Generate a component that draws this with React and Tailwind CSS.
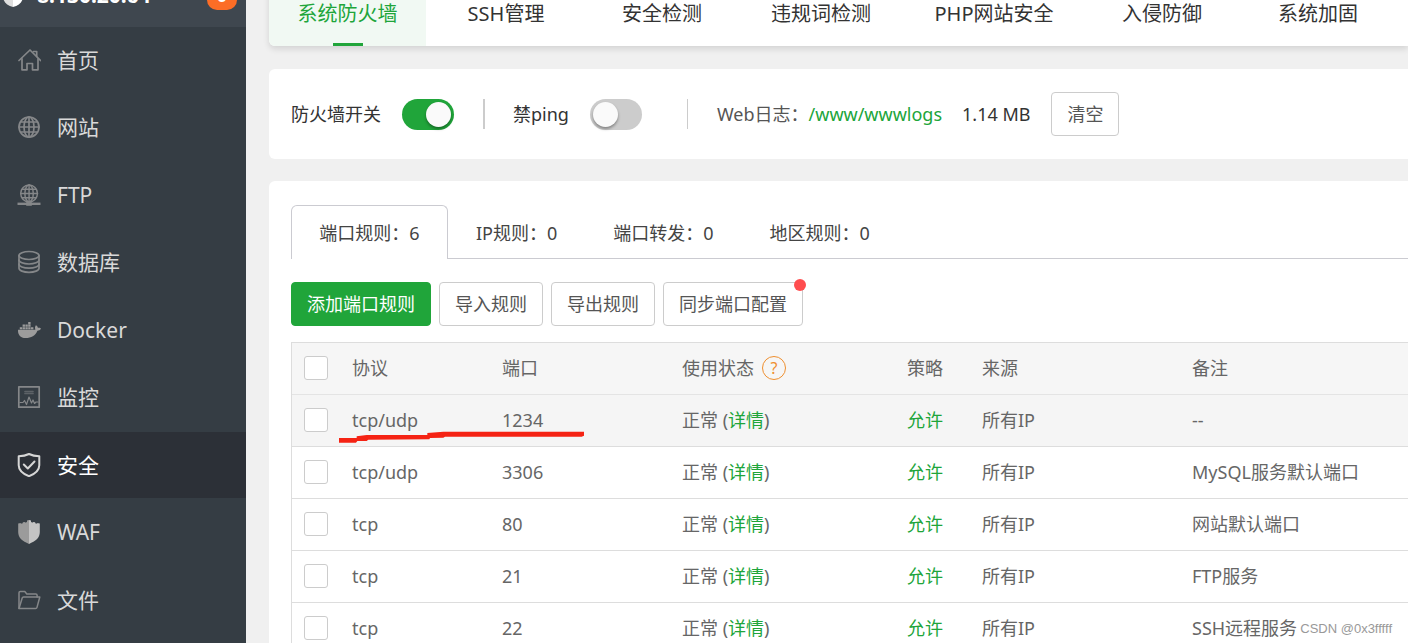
import React from "react";
import { FaDocker } from "react-icons/fa";

const line = { fill: "none", stroke: "currentColor", strokeWidth: 1.7, strokeLinejoin: "round", strokeLinecap: "round" };

function Icon({ children }) {
  return (
    <svg viewBox="0 0 24 24" className="size-6 shrink-0" aria-hidden="true">
      {children}
    </svg>
  );
}

const HomeIcon = () => (
  <Icon>
    <g {...line}>
      <path d="M2 12.5 13 2l10.500 10.500" />
      <path d="M16.500 3.500h3.200v5" />
      <path d="M5 10.800v11h5v-6.300h5.500v6.300H21v-11" />
    </g>
  </Icon>
);

const Globe = () => (
  <g {...line}>
    <circle cx="12" cy="12" r="10" />
    <ellipse cx="12" cy="12" rx="5" ry="10" />
    <path d="M12 2v20M2 12h20M3.600 7h16.800M3.600 17h16.800" />
  </g>
);

const SiteIcon = () => (
  <Icon>
    <Globe />
  </Icon>
);

const FtpIcon = () => (
  <Icon>
    <g transform="translate(2 .4) scale(.84)">
      <Globe />
    </g>
    <path d="M9.200 18.800h5.600v4H9.200z" fill="currentColor" />
    <path d="M.5 20.800h23" stroke="currentColor" strokeWidth="2.400" />
  </Icon>
);

const DatabaseIcon = () => (
  <Icon>
    <g {...line}>
      <ellipse cx="12" cy="5.500" rx="10" ry="4" />
      <path d="M2 5.500v12.800c0 2.300 4.500 4 10 4s10-1.700 10-4V5.500" />
      <path d="M2 10c0 2.200 4.500 4 10 4s10-1.800 10-4M2 14.200c0 2.200 4.500 4 10 4s10-1.800 10-4" />
    </g>
  </Icon>
);

const MonitorIcon = () => (
  <Icon>
    <g {...line}>
      <path d="M1.800 1.800h20.400v20.400H1.800z" />
      <path d="M8 6.500h8M8 8.500h8" opacity=".5" />
      <path d="M3 17.500h3l1.500-2 2 4 2.500-7.500 2.500 6 1.500-3 1.500 3.500 1.500-1.500h2" strokeWidth="1.200" />
    </g>
  </Icon>
);

const ShieldIcon = () => (
  <Icon>
    <g {...line} strokeWidth="2">
      <path d="M12 1C8.500 2.800 5 3.200 1.700 3.200v9c0 5.300 4.800 8.800 10.300 11 5.500-2.200 10.300-5.700 10.300-11v-9C19 3.200 15.500 2.800 12 1z" />
      <path d="m6.800 11.500 4 4L17.500 8.500" />
    </g>
  </Icon>
);

const WafIcon = () => (
  <Icon>
    <path d="M12 0v24C5.500 21 1.200 18 1.200 12V3.500l2.600-.5v.8l2-.5v-1l2.400-.4v.8L10 2V.6z" fill="#9b9b9b" />
    <path d="M12 0v24c6.500-3 10.800-6 10.800-12V3.500l-2.600-.5v.8l-2-.5v-1l-2.400-.4v.8L14 2V.6z" fill="#c4c4c4" />
  </Icon>
);

const FolderIcon = () => (
  <Icon>
    <g {...line} strokeWidth="1.500">
      <path d="M2 20.500V4.800c0-.8.500-1.300 1.300-1.300h4.500l2 2.500h9c.8 0 1.300.5 1.300 1.300V9" />
      <path d="M2 20.500 5.200 10c.2-.7.600-1 1.300-1h16.300L20 19.400c-.2.700-.7 1.100-1.400 1.100z" />
    </g>
  </Icon>
);

const nav = [
  { label: "首页", icon: <HomeIcon /> },
  { label: "网站", icon: <SiteIcon /> },
  { label: "FTP", icon: <FtpIcon /> },
  { label: "数据库", icon: <DatabaseIcon /> },
  { label: "Docker", icon: <FaDocker className="size-6 shrink-0 pl-px text-[#9c9c9c]" aria-hidden="true" /> },
  { label: "监控", icon: <MonitorIcon /> },
  { label: "安全", icon: <ShieldIcon />, active: true },
  { label: "WAF", icon: <WafIcon /> },
  { label: "文件", icon: <FolderIcon /> },
];

const sections = ["系统防火墙", "SSH管理", "安全检测", "违规词检测", "PHP网站安全", "入侵防御", "系统加固"];

const ruleTabs = ["端口规则：6", "IP规则：0", "端口转发：0", "地区规则：0"];

const rules = [
  { protocol: "tcp/udp", port: "1234", note: "--", marked: true },
  { protocol: "tcp/udp", port: "3306", note: "MySQL服务默认端口" },
  { protocol: "tcp", port: "80", note: "网站默认端口" },
  { protocol: "tcp", port: "21", note: "FTP服务" },
  { protocol: "tcp", port: "22", note: "SSH远程服务" },
];

function Sidebar() {
  return (
    <aside className="flex w-[246px] shrink-0 flex-col bg-[#353d44] text-[21px] text-[#d9d9d9]">
      <div className="-mt-[37px] flex h-16 shrink-0 items-center bg-[#3f474f] pr-[9px] font-bold text-white">
        <svg viewBox="0 0 20 24" className="ml-[3px] h-6 w-5 shrink-0" aria-hidden="true">
          <path d="M10 0v24C4 22.500 0 19 0 13V3z" fill="#dedede" />
          <path d="M10 0v24c6-1.500 10-5 10-11V3z" fill="#fff" />
        </svg>
        <span className="ml-[14px] grow">8.130.20.64</span>
        <span className="flex h-[30px] w-[30px] items-center justify-center rounded-[10px] bg-[#fc6d26] text-lg">0</span>
      </div>
      <nav>
        <ul>
          {nav.map((item) => (
            <li key={item.label} className="mb-px even:mb-0.5">
              <a
                href="#"
                className={`flex h-[66px] items-center gap-4 pl-[17px] ${item.active ? "bg-[#2c3037] text-white" : ""}`}
              >
                <span className={item.active ? "text-[#d6d6d6]" : "text-[#858789]"}>{item.icon}</span>
                {item.label}
              </a>
            </li>
          ))}
        </ul>
      </nav>
    </aside>
  );
}

function Switch({ label, on }) {
  return (
    <label className="flex items-center gap-[21px] text-[#333]">
      {label}
      <input type="checkbox" role="switch" defaultChecked={on} className="peer sr-only" />
      <span className="flex h-[31px] w-[52px] items-center rounded-full bg-[#ccc] px-[3px] peer-checked:justify-end peer-checked:bg-[#20a53a]">
        <span className="size-[25px] rounded-full bg-[#fafafa] shadow-[0_2px_3px_rgba(0,0,0,0.35)]" />
      </span>
    </label>
  );
}

function Button({ children, primary }) {
  return (
    <button
      type="button"
      className={`relative h-11 rounded-[4px] border px-[15px] ${
        primary ? "border-[#20a53a] bg-[#20a53a] text-white" : "border-[#ccc] bg-white text-[#555]"
      }`}
    >
      {children}
    </button>
  );
}

function Check({ label }) {
  return (
    <input
      type="checkbox"
      aria-label={label}
      className="block size-6 appearance-none rounded-[3px] border border-[#ccc] bg-white checked:bg-[#20a53a]"
    />
  );
}

function RulesTable() {
  return (
    <div className="relative mt-4 border-t border-l border-[#ddd]">
      <table className="w-full table-fixed border-separate border-spacing-0 text-left text-[#666]">
        <colgroup>
          <col className="w-12" />
          <col className="w-[150px]" />
          <col className="w-[180px]" />
          <col className="w-[225px]" />
          <col className="w-[75px]" />
          <col className="w-[210px]" />
          <col />
        </colgroup>
        <thead className="bg-[#f6f6f6]">
          <tr className="[&>th]:h-[52px] [&>th]:border-b [&>th]:border-[#e4e4e4] [&>th]:px-3 [&>th]:pb-0.5 [&>th]:font-normal">
            <th>
              <Check label="全选" />
            </th>
            <th>协议</th>
            <th>端口</th>
            <th>
              <span className="flex items-center gap-2">
                使用状态
                <a
                  href="#"
                  className="flex size-6 items-center justify-center rounded-full border border-[#ef8f2f] text-base text-[#ef8f2f]"
                >
                  ?
                </a>
              </span>
            </th>
            <th>策略</th>
            <th>来源</th>
            <th>备注</th>
          </tr>
        </thead>
        <tbody>
          {rules.map((rule) => (
            <tr
              key={rule.port}
              className={`[&>td]:h-[52px] [&>td]:border-b [&>td]:border-[#ddd] [&>td]:px-3 [&>td]:pb-0.5 [&>td]:whitespace-nowrap ${
                rule.marked ? "bg-[#f5f5f5]" : ""
              }`}
            >
              <td>
                <Check label={rule.port} />
              </td>
              <td>{rule.protocol}</td>
              <td>{rule.port}</td>
              <td>
                正常 (
                <a href="#" className="text-[#20a53a]">
                  详情
                </a>
                )
              </td>
              <td>
                <a href="#" className="text-[#20a53a]">
                  允许
                </a>
              </td>
              <td>所有IP</td>
              <td>{rule.note}</td>
            </tr>
          ))}
        </tbody>
      </table>
      <svg
        viewBox="0 0 735 36"
        className="pointer-events-none absolute top-[88px] left-[47px] h-3 w-[245px]"
        aria-hidden="true"
      >
        <path
          d="M0 21h53v-5l30-4h182v-6l48-4h422v12l-7 3H318l-5 3-40 1-2 4-183 1-5 4H55l-4 5H0z"
          fill="#f52314"
        />
      </svg>
    </div>
  );
}

export default function App() {
  return (
    <div className="relative flex h-screen overflow-hidden bg-[#f0f0f0] font-['Noto_Sans','Noto_Sans_CJK_SC',sans-serif] text-[18px] leading-6">
      <Sidebar />
      <main className="flex min-w-0 grow flex-col gap-[22px] pl-[23px]">
        <nav className="-mt-[19px] mb-px grid h-[65px] shrink-0 grid-cols-[157px_160px_152px_166px_180px_156px_156px] rounded-bl-[6px] bg-white text-[20px] text-[#333] shadow-[0_3px_6px_rgba(0,0,0,0.12)]">
          {sections.map((name, i) => (
            <a
              key={name}
              href="#"
              className={`relative flex items-center justify-center whitespace-nowrap ${
                i === 0 ? "rounded-bl-[6px] bg-[#f1f9f3] text-[#20a53a]" : ""
              }`}
            >
              {name}
              {i === 0 && <span className="absolute bottom-0 left-1/2 h-[3px] w-[30px] -translate-x-1/2 bg-[#20a53a]" />}
            </a>
          ))}
        </nav>

        <section className="flex h-[90px] shrink-0 items-center rounded-l-[6px] bg-white pl-[22px] whitespace-nowrap">
          <Switch label="防火墙开关" on />
          <span className="ml-[29px] h-[30px] w-0.5 bg-[#ccc]" />
          <span className="ml-7">
            <Switch label="禁ping" />
          </span>
          <span className="ml-[45px] h-[30px] w-px bg-[#ccc]" />
          <span className="ml-[29px] text-[#555]">Web日志：</span>
          <a href="#" className="text-[#20a53a]">
            /www/wwwlogs
          </a>
          <span className="mr-[21px] ml-5 text-[#333]">1.14 MB</span>
          <Button>清空</Button>
        </section>

        <section className="grow rounded-tl-[6px] bg-white pt-6 pl-[22px]">
          <div className="flex h-[54px] text-[#444]" role="tablist">
            {ruleTabs.map((name, i) => (
              <button
                key={name}
                type="button"
                role="tab"
                aria-selected={i === 0}
                className={
                  i === 0
                    ? "w-[157px] rounded-t-[6px] border border-b-0 border-[#cbcbd1] pt-px"
                    : "border-b border-[#cbcbd1] px-[28px] pt-[3px]"
                }
              >
                {name}
              </button>
            ))}
            <span className="grow border-b border-[#cbcbd1]" />
          </div>

          <div className="mt-[23px] flex gap-2">
            <Button primary>添加端口规则</Button>
            <Button>导入规则</Button>
            <Button>导出规则</Button>
            <Button>
              同步端口配置
              <span className="absolute -top-1 -right-1 size-3 rounded-full bg-[#ff4d4f]" />
            </Button>
          </div>

          <RulesTable />
        </section>
      </main>
      <span className="absolute right-4 bottom-0.5 font-['Liberation_Sans',sans-serif] text-[13px] text-[#999]">
        CSDN @0x3fffff
      </span>
    </div>
  );
}
